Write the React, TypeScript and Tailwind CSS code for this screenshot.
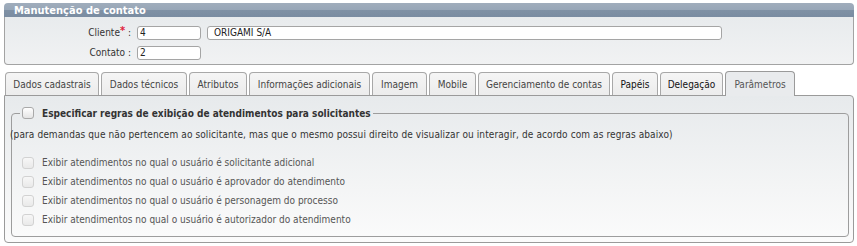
import React from "react";

const tabs = [
  { label: "Dados cadastrais", w: "w-[94px]" },
  { label: "Dados técnicos", w: "w-[86px]" },
  { label: "Atributos", w: "w-[58px]" },
  { label: "Informações adicionais", w: "w-[121px]" },
  { label: "Imagem", w: "w-[55px]" },
  { label: "Mobile", w: "w-[47px]" },
  { label: "Gerenciamento de contas", w: "w-[132px]" },
  { label: "Papéis", w: "w-[46px]", strong: true },
  { label: "Delegação", w: "w-[63px]", strong: true },
];

const rules = [
  "Exibir atendimentos no qual o usuário é solicitante adicional",
  "Exibir atendimentos no qual o usuário é aprovador do atendimento",
  "Exibir atendimentos no qual o usuário é personagem do processo",
  "Exibir atendimentos no qual o usuário é autorizador do atendimento",
];

function Box({ disabled }: { disabled?: boolean }) {
  return (
    <span
      className={`inline-block w-[12px] h-[12px] rounded-[3px] border ${
        disabled
          ? "border-[#d2d2d2] bg-[linear-gradient(to_bottom,#f7f7f7,#e9e9e9)]"
          : "border-[#a9a9a9] bg-[linear-gradient(to_bottom,#ffffff,#e4e4e4)]"
      }`}
    />
  );
}

export default function App() {
  return (
    <div
      className="w-[857px] h-[246px] bg-white pt-[3px] pl-[4px] text-[10px] text-[#333]"
      style={{ fontFamily: '"DejaVu Sans Condensed", "Liberation Sans", sans-serif' }}
    >
      {/* cabeçalho */}
      <div className="w-[850px]">
        <div className="h-[14px] rounded-t-[4px] bg-[linear-gradient(to_bottom,#a0adbc_0%,#97a6b7_50%,#7f91a5_52%,#7a8ca1_100%)] pl-[10px] text-white font-bold text-[11px] leading-[15px]">
          Manutenção de contato
        </div>
        <div className="h-[48px] border-x border-b border-[#a3a3a3] rounded-b-[4px] bg-[linear-gradient(to_bottom,#e8ebed,#f1f2f3)] pt-[9px]">
          <div className="flex items-center h-[14px]">
            <div className="w-[127px] text-right pr-[1px] leading-[14px]">
              Cliente<span className="text-[#e0203a] font-bold align-top text-[11px] leading-[10px]">*</span> :
            </div>
            <div className="ml-[5px] w-[64px] h-[14px] border border-[#a5a5a5] rounded-[3px] bg-white pl-[2px] leading-[12px] text-[#222]">4</div>
            <div className="ml-[6px] w-[515px] h-[14px] border border-[#a5a5a5] rounded-[3px] bg-white pl-[6px] leading-[12px] text-[#222]">ORIGAMI S/A</div>
          </div>
          <div className="flex items-center h-[14px] mt-[6px]">
            <div className="w-[127px] text-right pr-[1px] leading-[14px]">Contato :</div>
            <div className="ml-[5px] w-[64px] h-[14px] border border-[#a5a5a5] rounded-[3px] bg-white pl-[2px] leading-[12px] text-[#222]">2</div>
          </div>
        </div>
      </div>

      {/* abas */}
      <div className="mt-[6px] ml-[1px] flex items-end gap-[2px] h-[24px]">
        {tabs.map((t) => (
          <div
            key={t.label}
            className={`${t.w} h-[23px] border border-b-0 border-[#a8a8a8] rounded-t-[4px] bg-[linear-gradient(to_bottom,#f5f5f5,#ececec)] flex items-center justify-center pt-[1px] ${
              t.strong ? "text-[#111]" : "text-[#444]"
            }`}
          >
            {t.label}
          </div>
        ))}
        <div className="relative z-10 w-[70px] h-[25px] -mb-[1px] border border-b-0 border-[#9a9a9a] rounded-t-[4px] bg-[#e9ebed] flex items-center justify-center text-[#555]">
          Parâmetros
        </div>
      </div>

      {/* conteúdo */}
      <div className="w-[850px] h-[148px] border border-[#9a9a9a] rounded-b-[4px] rounded-tr-[4px] bg-[linear-gradient(to_bottom,#e7eaec,#fbfbfb)] pt-[10px] pl-[6px] pr-[4px]">
        <fieldset className="h-[131px] border border-[#9d9d9d] rounded-[4px] px-[8px] pb-[8px]">
          <legend className="px-[2px] h-[14px] flex items-center">
            <Box />
            <span className="ml-[8px] font-bold text-[#333]">
              Especificar regras de exibição de atendimentos para solicitantes
            </span>
          </legend>
          <div className="-ml-[10px] mt-[8px] h-[14px] leading-[14px] text-[#333] whitespace-nowrap tracking-[0.1px]">
            (para demandas que não pertencem ao solicitante, mas que o mesmo possui direito de visualizar ou interagir, de acordo com as regras abaixo)
          </div>
          <div className="mt-[11px]">
            {rules.map((r) => (
              <div key={r} className="h-[19px] flex items-center ml-[2px] text-[#555]">
                <Box disabled />
                <span className="ml-[8px]">{r}</span>
              </div>
            ))}
          </div>
        </fieldset>
      </div>
    </div>
  );
}
